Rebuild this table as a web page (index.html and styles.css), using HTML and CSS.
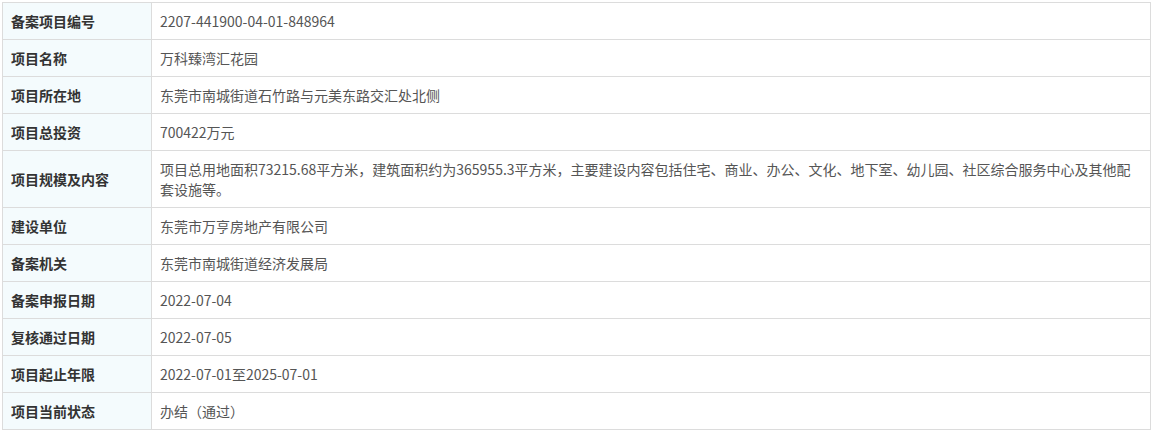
FILE: index.html
```html
<!DOCTYPE html>
<html lang="zh-CN">
<head>
<meta charset="utf-8">
<link rel="stylesheet" href="styles.css">
</head>
<body>
<table class="info">
  <colgroup><col class="c-label"><col></colgroup>
  <tr><th>备案项目编号</th><td>2207-441900-04-01-848964</td></tr>
  <tr><th>项目名称</th><td>万科臻湾汇花园</td></tr>
  <tr><th>项目所在地</th><td>东莞市南城街道石竹路与元美东路交汇处北侧</td></tr>
  <tr><th>项目总投资</th><td>700422万元</td></tr>
  <tr><th>项目规模及内容</th><td>项目总用地面积73215.68平方米，建筑面积约为365955.3平方米，主要建设内容包括住宅、商业、办公、文化、地下室、幼儿园、社区综合服务中心及其他配套设施等。</td></tr>
  <tr><th>建设单位</th><td>东莞市万亨房地产有限公司</td></tr>
  <tr><th>备案机关</th><td>东莞市南城街道经济发展局</td></tr>
  <tr><th>备案申报日期</th><td>2022-07-04</td></tr>
  <tr><th>复核通过日期</th><td>2022-07-05</td></tr>
  <tr><th>项目起止年限</th><td>2022-07-01至2025-07-01</td></tr>
  <tr><th>项目当前状态</th><td>办结（通过）</td></tr>
</table>
</body>
</html>
```
FILE: styles.css
```css
html, body {
  margin: 0;
  padding: 0;
  background: #ffffff;
}
body {
  padding: 2px;
  font-family: "Noto Sans CJK SC", "Noto Sans", sans-serif;
  font-size: 14px;
}
.info {
  width: 1149px;
  border-collapse: collapse;
  table-layout: fixed;
}
.c-label {
  width: 149px;
}
.info th,
.info td {
  border: 1px solid #dcdcdc;
  padding: 8px 8px;
  line-height: 20px;
  vertical-align: middle;
  text-align: left;
}
.info th {
  background: #f4fbfd;
  color: #333333;
  font-weight: bold;
}
.info td {
  color: #555555;
  font-weight: normal;
}
```
